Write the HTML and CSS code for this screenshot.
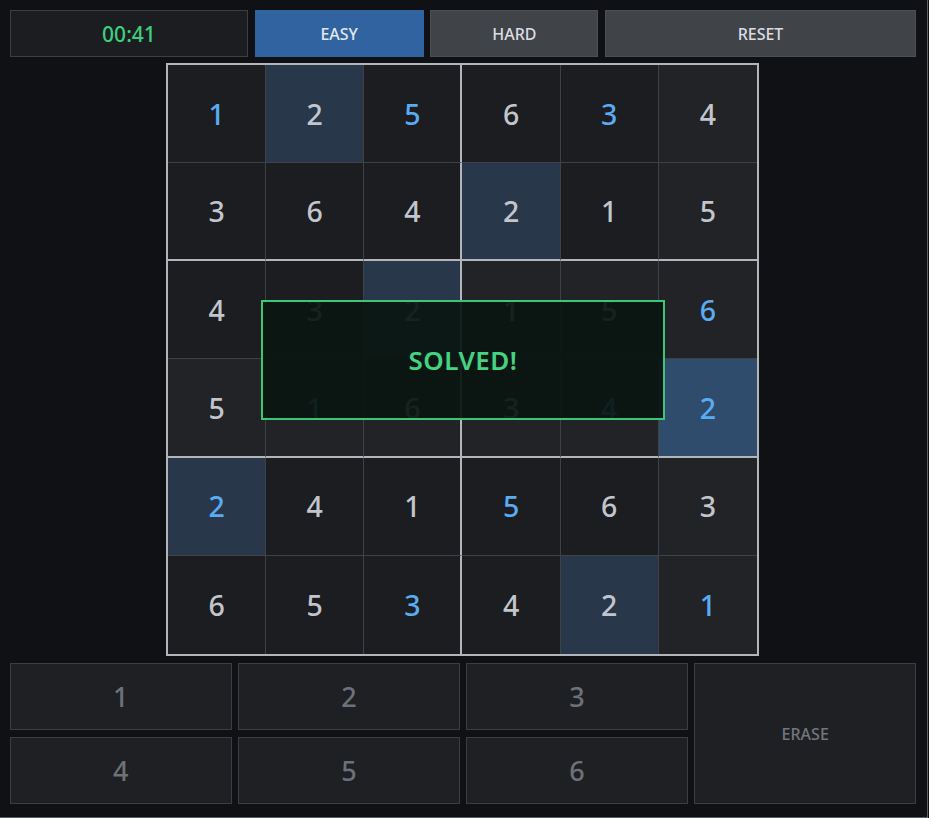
FILE: index.html
```html
<!DOCTYPE html>
<html lang="en">
<head>
<meta charset="utf-8">
<title>Sudoku 6x6</title>
<link rel="stylesheet" href="styles.css">
</head>
<body>
<div class="app">
  <div class="topbar">
    <div class="timer">00:41</div>
    <button class="btn btn-active">EASY</button>
    <button class="btn">HARD</button>
    <button class="btn">RESET</button>
  </div>

  <div class="board-wrap">
    <div class="board">
      <div class="cell user">1</div>
      <div class="cell same">2</div>
      <div class="cell user box-r">5</div>
      <div class="cell">6</div>
      <div class="cell user">3</div>
      <div class="cell rel">4</div>

      <div class="cell box-b">3</div>
      <div class="cell box-b">6</div>
      <div class="cell box-b box-r">4</div>
      <div class="cell same box-b">2</div>
      <div class="cell box-b">1</div>
      <div class="cell rel box-b">5</div>

      <div class="cell">4</div>
      <div class="cell">3</div>
      <div class="cell same box-r">2</div>
      <div class="cell rel">1</div>
      <div class="cell rel">5</div>
      <div class="cell rel user">6</div>

      <div class="cell rel box-b">5</div>
      <div class="cell rel user box-b">1</div>
      <div class="cell rel box-b box-r">6</div>
      <div class="cell rel box-b">3</div>
      <div class="cell rel user box-b">4</div>
      <div class="cell selected user box-b">2</div>

      <div class="cell same user">2</div>
      <div class="cell">4</div>
      <div class="cell box-r">1</div>
      <div class="cell user">5</div>
      <div class="cell">6</div>
      <div class="cell rel">3</div>

      <div class="cell">6</div>
      <div class="cell">5</div>
      <div class="cell user box-r">3</div>
      <div class="cell">4</div>
      <div class="cell same">2</div>
      <div class="cell rel user">1</div>
    </div>
    <div class="solved">SOLVED!</div>
  </div>

  <div class="pad">
    <button class="key">1</button>
    <button class="key">2</button>
    <button class="key">3</button>
    <button class="key erase">ERASE</button>
    <button class="key">4</button>
    <button class="key">5</button>
    <button class="key">6</button>
  </div>
</div>
</body>
</html>
```

FILE: styles.css
```css
* {
  box-sizing: border-box;
}

html, body {
  margin: 0;
  padding: 0;
  background: #0f1114;
}

body {
  font-family: "Noto Sans", "Open Sans", "DejaVu Sans", sans-serif;
  width: 929px;
  height: 818px;
  overflow: hidden;
}

.app {
  width: 928px;
  height: 818px;
  padding: 10px 11px 0 10px;
  border-right: 1px solid #5c5f63;
  border-bottom: 1px solid #5c5f63;
  display: flex;
  flex-direction: column;
  gap: 6px;
}

/* ---------- top bar ---------- */
.topbar {
  height: 47px;
  display: grid;
  grid-template-columns: 238fr 169fr 168fr 311fr;
  column-gap: 6.67px;
}

.timer {
  display: flex;
  align-items: center;
  justify-content: center;
  background: #1b1d21;
  border: 1px solid #3b3e43;
  color: #3ecf7e;
  font-size: 21px;
  font-weight: 500;
}

.btn {
  font-family: inherit;
  border: 1px solid #4b4e53;
  background: #404347;
  color: #dadde2;
  font-size: 16px;
  font-weight: 500;
  padding: 0;
  cursor: pointer;
}

.btn-active {
  background: #3163a0;
  border-color: #3163a0;
  color: #e2e8f0;
}

/* ---------- board ---------- */
.board-wrap {
  position: relative;
  align-self: flex-start;
  margin-left: 156px;
  width: 593px;
  height: 593px;
}

.board {
  width: 593px;
  height: 593px;
  border: 2px solid #b2b5ba;
  display: grid;
  grid-template-columns: repeat(6, 1fr);
  grid-template-rows: repeat(6, 1fr);
  background: #1b1d21;
}

.cell {
  display: flex;
  align-items: center;
  justify-content: center;
  background: #1b1d21;
  color: #c2c6cc;
  font-size: 28.5px;
  font-weight: 500;
  border-right: 1px solid #3e4146;
  border-bottom: 1px solid #3e4146;
}

.cell:nth-child(6n) {
  border-right: none;
}

.cell:nth-child(n+31) {
  border-bottom: none;
}

.cell.box-r {
  border-right: 2px solid #b2b5ba;
}

.cell.box-b {
  border-bottom: 2px solid #b2b5ba;
}

.cell.rel {
  background: #212327;
}

.cell.same {
  background: #28374a;
}

.cell.selected {
  background: #2f4c6c;
}

.cell.user {
  color: #5aacf2;
}

.solved {
  position: absolute;
  left: 95px;
  top: 237px;
  width: 404px;
  height: 120px;
  display: flex;
  align-items: center;
  justify-content: center;
  background: rgba(10, 21, 17, 0.93);
  border: 2px solid #3cc675;
  color: #45d283;
  font-size: 26px;
  font-weight: 600;
  letter-spacing: 0.5px;
}

/* ---------- number pad ---------- */
.pad {
  margin-top: 1px;
  display: grid;
  grid-template-columns: repeat(4, 1fr);
  grid-template-rows: 67px 67px;
  column-gap: 6.5px;
  row-gap: 7px;
}

.key {
  font-family: inherit;
  background: #1e2024;
  border: 1px solid #3a3d42;
  color: #6d7178;
  font-size: 27px;
  font-weight: 500;
  padding: 0;
  cursor: pointer;
}

.key.erase {
  grid-column: 4;
  grid-row: 1 / span 2;
  font-size: 16px;
  font-weight: 500;
  color: #72767c;
}
```
